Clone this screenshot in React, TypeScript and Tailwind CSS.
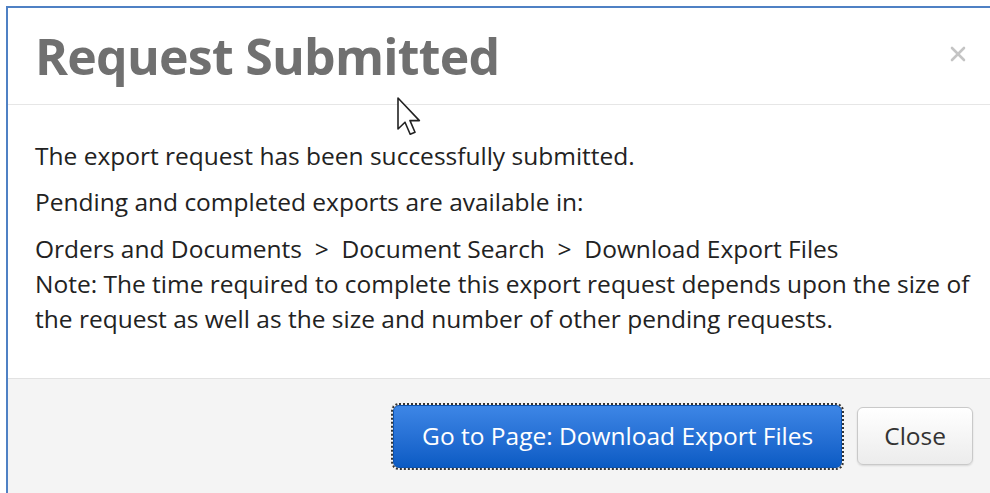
import { X } from 'lucide-react';

const font = { fontFamily: '"Open Sans", "Noto Sans", Arial, sans-serif' };

function Pointer() {
  return (
    <svg className="absolute left-[397px] top-[97px]" width="24" height="40" viewBox="0 0 12 20">
      <path d="M0.5 0.5 L0.5 16 L4 12.6 L6.6 18.6 L9 17.6 L6.5 11.8 L11.2 11.8 Z" fill="#fff" stroke="#222" strokeWidth="0.8" strokeLinejoin="round" />
    </svg>
  );
}

export default function App() {
  return (
    <div className="relative w-[990px] h-[493px] overflow-hidden bg-white" style={font}>
      <div className="ml-[6px] mt-[6px] flex h-[487px] flex-col border-l-2 border-t-2 border-[#4f81c4]">
        <div className="flex h-[97px] items-center justify-between border-b border-[#e6e6e6] pl-[27px] pr-[20px]">
          <h2 className="text-[50px] font-bold leading-none tracking-[-0.75px] text-[#707070]">Request Submitted</h2>
          <X className="mb-1 h-[24px] w-[24px] text-[#c4c4c4]" strokeWidth={2.6} />
        </div>

        <div className="flex-1 pl-[27px] pr-2 pt-[33px] text-[24.5px] leading-[35px] text-[#222]">
          <p className="mb-[11px]">The export request has been successfully submitted.</p>
          <p className="mb-[12px]">Pending and completed exports are available in:</p>
          <p>
            Orders and Documents&nbsp; &gt; &nbsp;Document Search&nbsp; &gt; &nbsp;Download Export Files
            <br />
            Note: The time required to complete this export request depends upon the size of the request as well as the size and number of other pending requests.
          </p>
        </div>

        <div className="flex h-[115px] items-center justify-end gap-[15px] border-t border-[#e2e2e2] bg-[#f4f4f4] pr-[17px]">
          <button className="h-[63px] rounded-[6px] border border-[#0b52b0] bg-gradient-to-b from-[#3d86e6] to-[#0a5bc4] px-[28px] text-[24.5px] text-white outline-2 outline-dotted outline-offset-0 outline-[#333]">
            Go to Page: Download Export Files
          </button>
          <button className="h-[58px] rounded-[6px] border border-[#c9c9c9] bg-gradient-to-b from-white to-[#ececec] px-[26px] text-[24.5px] text-[#333] shadow-[0_1px_2px_rgba(0,0,0,0.12)]">
            Close
          </button>
        </div>
      </div>
      <Pointer />
    </div>
  );
}
